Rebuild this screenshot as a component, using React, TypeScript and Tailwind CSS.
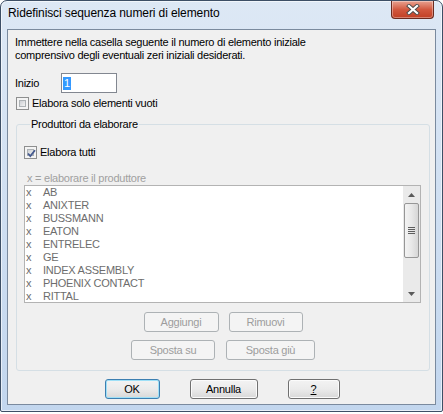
function CheckBox({ checked }: { checked?: boolean }) {
  return (
    <span className="relative flex h-[13px] w-[13px] shrink-0 border border-[#8e8f8f] bg-[#f4f4f4] p-[2px]">
      <span className="flex-1 border border-[#adb2b5] bg-gradient-to-br from-[#cdd0d4] to-[#f2f2f2]" />
      {checked && (
        <svg className="absolute left-[1px] top-[1px]" width="11" height="11" viewBox="0 0 11 11">
          <path d="M2 5.5 L4.3 8 L9 2.2" fill="none" stroke="#44598f" strokeWidth="1.8" />
        </svg>
      )}
    </span>
  );
}

function Btn({ label, w, disabled, focus }: { label: React.ReactNode; w: string; disabled?: boolean; focus?: boolean }) {
  const base = 'flex h-[20px] items-center justify-center rounded-[3px] border text-[11px] leading-[13px]';
  if (disabled)
    return <div className={`${base} ${w} border-[#adb2b5] bg-[#f4f4f4] text-[#9d9d9d]`}>{label}</div>;
  return (
    <div
      className={`${base} ${w} bg-gradient-to-b from-[#f3f3f3] via-[#ebebeb] to-[#d8d8d8] text-black ${
        focus ? 'border-[#3c7fb1] shadow-[inset_0_0_0_1px_#9fe0f7]' : 'border-[#707070] shadow-[inset_0_0_0_1px_#fbfbfb]'
      }`}
    >
      {label}
    </div>
  );
}

const items = ['AB', 'ANIXTER', 'BUSSMANN', 'EATON', 'ENTRELEC', 'GE', 'INDEX ASSEMBLY', 'PHOENIX CONTACT', 'RITTAL'];

export default function App() {
  return (
    <div className="h-[414px] w-[443px] bg-white font-['Liberation_Sans',Arial,sans-serif]">
      <div className="flex h-[412px] w-[443px] flex-col rounded-t-[7px] rounded-b-[2px] border border-[#3d4f66] bg-gradient-to-b from-[#dde8f5] to-[#c2d6ee] shadow-[inset_0_0_0_1px_rgba(255,255,255,0.6)]">
        {/* title bar */}
        <div className="flex h-[28px] shrink-0 items-start justify-between">
          <div className="ml-[7px] mt-[5px] text-[12px] leading-[15px] tracking-[-0.1px] text-black">Ridefinisci sequenza numeri di elemento</div>
          <div className="mr-[8px] flex h-[18px] w-[43px] items-center justify-center rounded-b-[4px] border border-t-0 border-[#6b2a1f] bg-gradient-to-b from-[#e8a190] via-[#d2583f] to-[#c13f24] shadow-[inset_0_0_0_1px_rgba(255,255,255,0.35)]">
            <svg width="14" height="11" viewBox="0 0 14 11">
              <path d="M3 2 L11 9 M11 2 L3 9" stroke="#4a4a4a" strokeWidth="4" strokeLinecap="square" />
              <path d="M3 2 L11 9 M11 2 L3 9" stroke="#ffffff" strokeWidth="2.2" strokeLinecap="square" />
            </svg>
          </div>
        </div>

        {/* client area */}
        <div className="mx-[6px] flex h-[376px] flex-col border border-[#7a8a9e] bg-[#f0f0f0] text-[11px] leading-[13px] tracking-[-0.25px] text-black">
          <p className="ml-[7px] mt-[6px]">
            Immettere nella casella seguente il numero di elemento iniziale
            <br />
            comprensivo degli eventuali zeri iniziali desiderati.
          </p>

          <div className="ml-[7px] mt-[11px] flex h-[20px] items-center">
            <span className="w-[46px]">Inizio</span>
            <div className="flex h-[20px] w-[56px] items-center border border-[#828790] bg-white pl-[1px]">
              <span className="bg-[#3399ff] px-[1px] text-white">1</span>
            </div>
          </div>

          <div className="ml-[8px] mt-[4px] flex items-center gap-[3px]">
            <CheckBox />
            <span>Elabora solo elementi vuoti</span>
          </div>

          <fieldset className="ml-[8px] mt-[8px] h-[253px] w-[414px] rounded-[3px] border border-[#d5dfe5] pb-[10px] pl-[7px] pr-[7px]">
            <legend className="ml-[6px] px-[1px] leading-[13px]">Produttori da elaborare</legend>
            <div className="mt-[15px] flex items-center gap-[3px]">
              <CheckBox checked />
              <span>Elabora tutti</span>
            </div>
            <div className="ml-[3px] mt-[13px] text-[#a0a0a0]">x = elaborare il produttore</div>

            <div className="flex h-[118px] w-[397px] border border-[#b3b3b3] bg-white">
              <div className="flex-1 overflow-hidden pl-[1px] text-[#6d6d6d]">
                {items.map((it) => (
                  <div key={it} className="flex h-[13px] leading-[13px]">
                    <span className="w-[17px]">x</span>
                    <span>{it}</span>
                  </div>
                ))}
              </div>
              <div className="flex w-[17px] flex-col bg-[#eaeaea]">
                <div className="flex h-[17px] items-center justify-center">
                  <svg width="7" height="4" viewBox="0 0 7 4">
                    <path d="M0 4 L3.5 0 L7 4 Z" fill="#5a5a5a" />
                  </svg>
                </div>
                <div className="mx-[1px] flex h-[55px] items-center justify-center rounded-[2px] border border-[#969696] bg-gradient-to-r from-[#f3f3f3] via-[#e8e8e8] to-[#d6d6d6]">
                  <svg width="7" height="7" viewBox="0 0 7 7">
                    <path d="M0 0.5 H7 M0 2.5 H7 M0 4.5 H7 M0 6.5 H7" stroke="#5d5d5d" strokeWidth="1" />
                  </svg>
                </div>
                <div className="flex-1" />
                <div className="flex h-[17px] items-center justify-center">
                  <svg width="7" height="4" viewBox="0 0 7 4">
                    <path d="M0 0 L7 0 L3.5 4 Z" fill="#5a5a5a" />
                  </svg>
                </div>
              </div>
            </div>

            <div className="mt-[9px] flex justify-center gap-[10px]">
              <Btn label="Aggiungi" w="w-[75px]" disabled />
              <Btn label="Rimuovi" w="w-[74px]" disabled />
            </div>
            <div className="mt-[8px] flex justify-center gap-[11px]">
              <Btn label="Sposta su" w="w-[84px]" disabled />
              <Btn label="Sposta giù" w="w-[89px]" disabled />
            </div>
          </fieldset>

          <div className="mt-[8px] flex justify-center gap-[30px] pl-[1px]">
            <Btn label="OK" w="w-[55px]" focus />
            <Btn label="Annulla" w="w-[68px]" />
            <Btn label={<span className="underline">?</span>} w="w-[52px]" />
          </div>
        </div>
      </div>
    </div>
  );
}
